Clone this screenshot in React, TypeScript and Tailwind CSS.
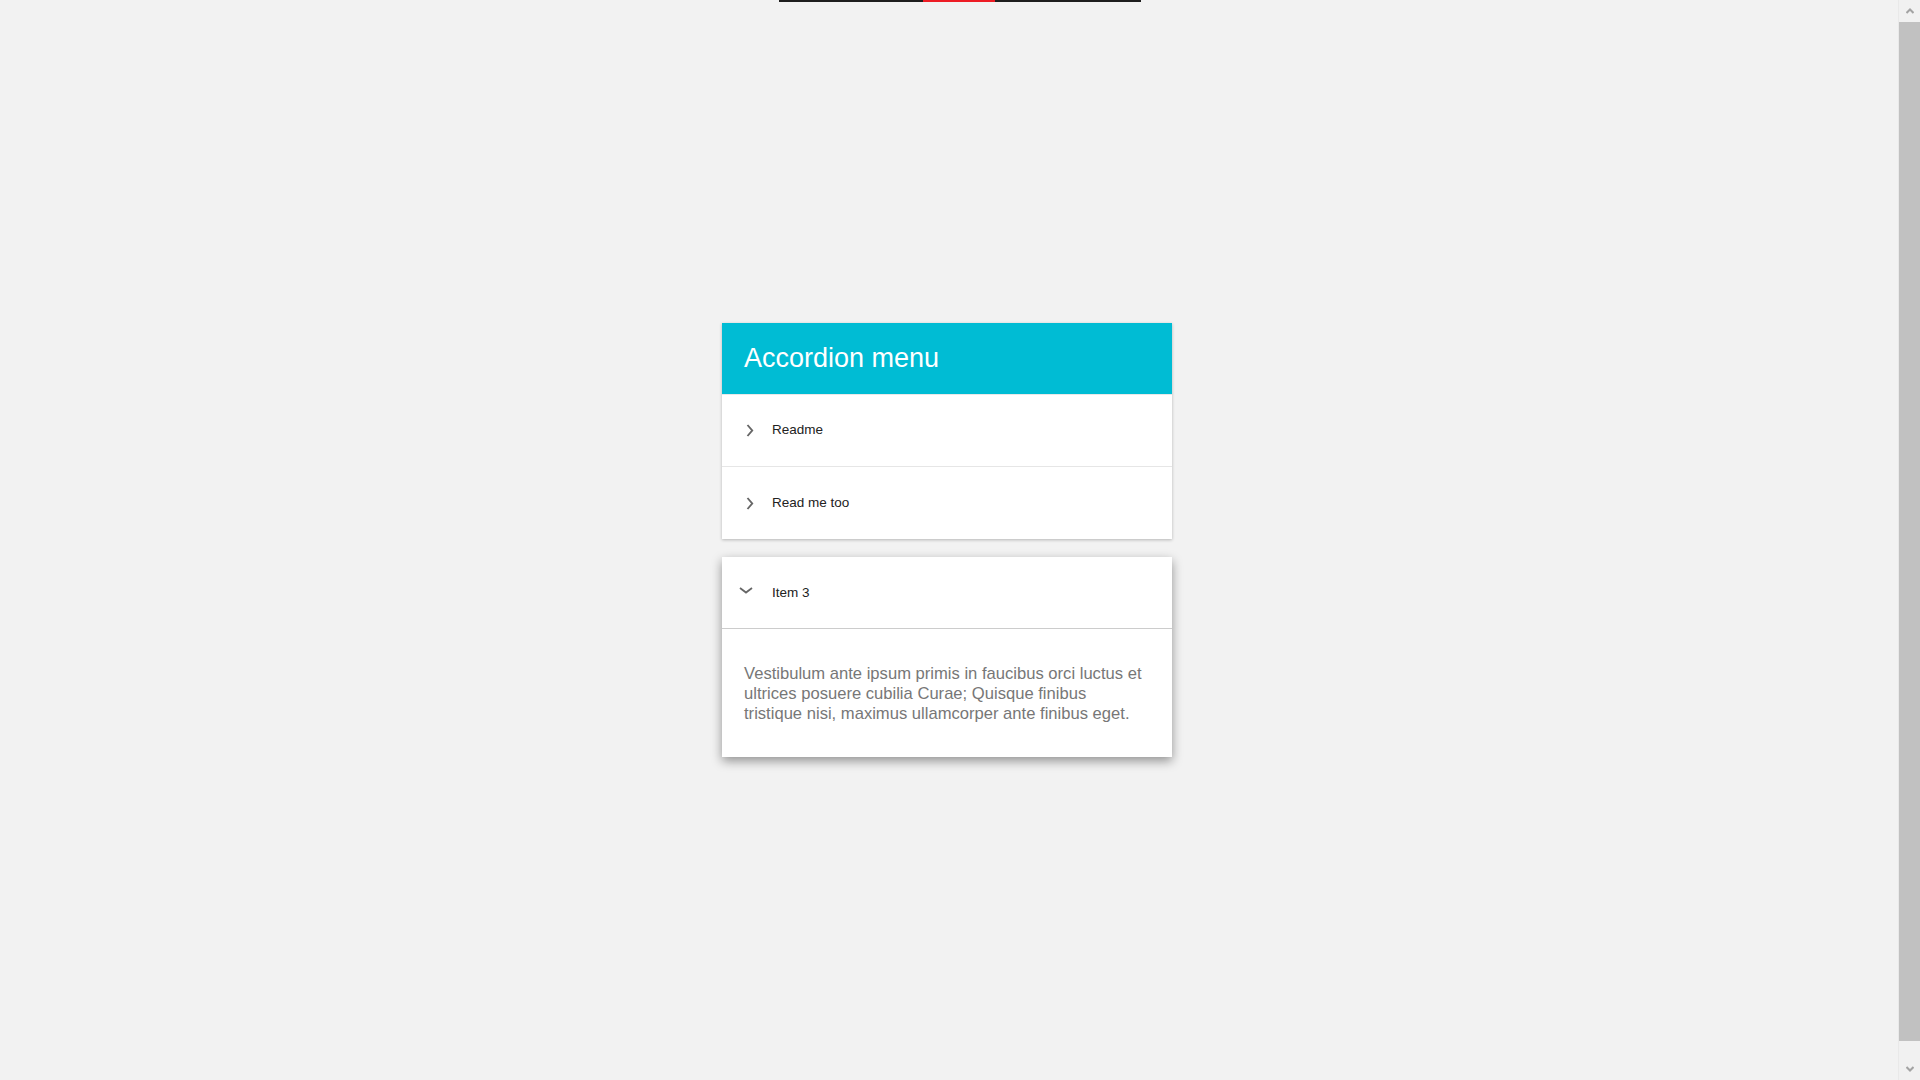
import React from "react";

function ChevronRight() {
  return (
    <svg width="8" height="13" viewBox="0 0 8 13" className="shrink-0">
      <path d="M1.5 1 L6.2 6.5 L1.5 12" fill="none" stroke="#666666" strokeWidth="1.9" strokeLinejoin="miter" />
    </svg>
  );
}

function ChevronDown() {
  return (
    <svg width="14" height="7" viewBox="0 0 14 7" className="shrink-0">
      <path d="M1 1 L7 5.5 L13 1" fill="none" stroke="#666666" strokeWidth="1.8" />
    </svg>
  );
}

function ScrollArrow({ up }: { up: boolean }) {
  return (
    <svg width="8" height="6" viewBox="0 0 8 6">
      <path d={up ? "M0.5 5 L4 1.5 L7.5 5" : "M0.5 1 L4 4.5 L7.5 1"} fill="none" stroke="#a3a3a3" strokeWidth="2" />
    </svg>
  );
}

export default function App() {
  return (
    <div
      className="flex h-[1080px] w-full overflow-hidden bg-[#f2f2f2]"
      style={{ fontFamily: '"Liberation Sans", Arial, sans-serif' }}
    >
      <main className="min-w-0 flex-1">
        <div className="flex justify-center pl-[22px]">
          <div className="flex h-[2px] w-[362px]">
            <div className="w-[144px] bg-[#1e1e1e]" />
            <div className="w-[72px] bg-[#ed1c24]" />
            <div className="flex-1 bg-[#1e1e1e]" />
          </div>
        </div>
        <div className="flex justify-center pr-[4px] pt-[321px]">
          <div className="flex w-[450px] flex-col gap-[18px]">
            <div className="bg-white shadow-[0_1px_3px_rgba(0,0,0,0.25)]">
              <div className="flex h-[72px] items-center border-b border-[#e8e8e8] bg-[#00bcd4] px-[22px]">
                <h1 className="text-[27px] leading-none text-white">Accordion menu</h1>
              </div>
              <div className="flex h-[72px] items-center border-b border-[#e6e6e6] pl-[24px] text-[13.5px] text-[#222]">
                <ChevronRight />
                <span className="ml-[18px]">Readme</span>
              </div>
              <div className="flex h-[72px] items-center pl-[24px] text-[13.5px] text-[#222]">
                <ChevronRight />
                <span className="ml-[18px]">Read me too</span>
              </div>
            </div>
            <div className="bg-white shadow-[0_4px_10px_rgba(0,0,0,0.4)]">
              <div className="flex h-[72px] items-center border-b border-[#cccccc] pl-[17px] text-[13.5px] text-[#222]">
                <div className="-mt-[4px]">
                  <ChevronDown />
                </div>
                <span className="ml-[19px] mt-[2px]">Item 3</span>
              </div>
              <div className="px-[22px] pb-[33px] pt-[35px]">
                <p className="text-[16.6px] leading-[20px] text-[#777777]">
                  Vestibulum ante ipsum primis in faucibus orci luctus et
                  <br />
                  ultrices posuere cubilia Curae; Quisque finibus
                  <br />
                  tristique nisi, maximus ullamcorper ante finibus eget.
                </p>
              </div>
            </div>
          </div>
        </div>
      </main>
      <div className="flex h-[1080px] w-[22px] shrink-0 flex-col border-l border-[#e9e9e9] bg-[#f1f1f1]">
        <div className="flex h-[22px] items-start justify-center pt-[8px]">
          <ScrollArrow up />
        </div>
        <div className="h-[1019px] bg-[#c1c1c1]" />
        <div className="flex flex-1 items-end justify-center pb-[8px]">
          <ScrollArrow up={false} />
        </div>
      </div>
    </div>
  );
}
